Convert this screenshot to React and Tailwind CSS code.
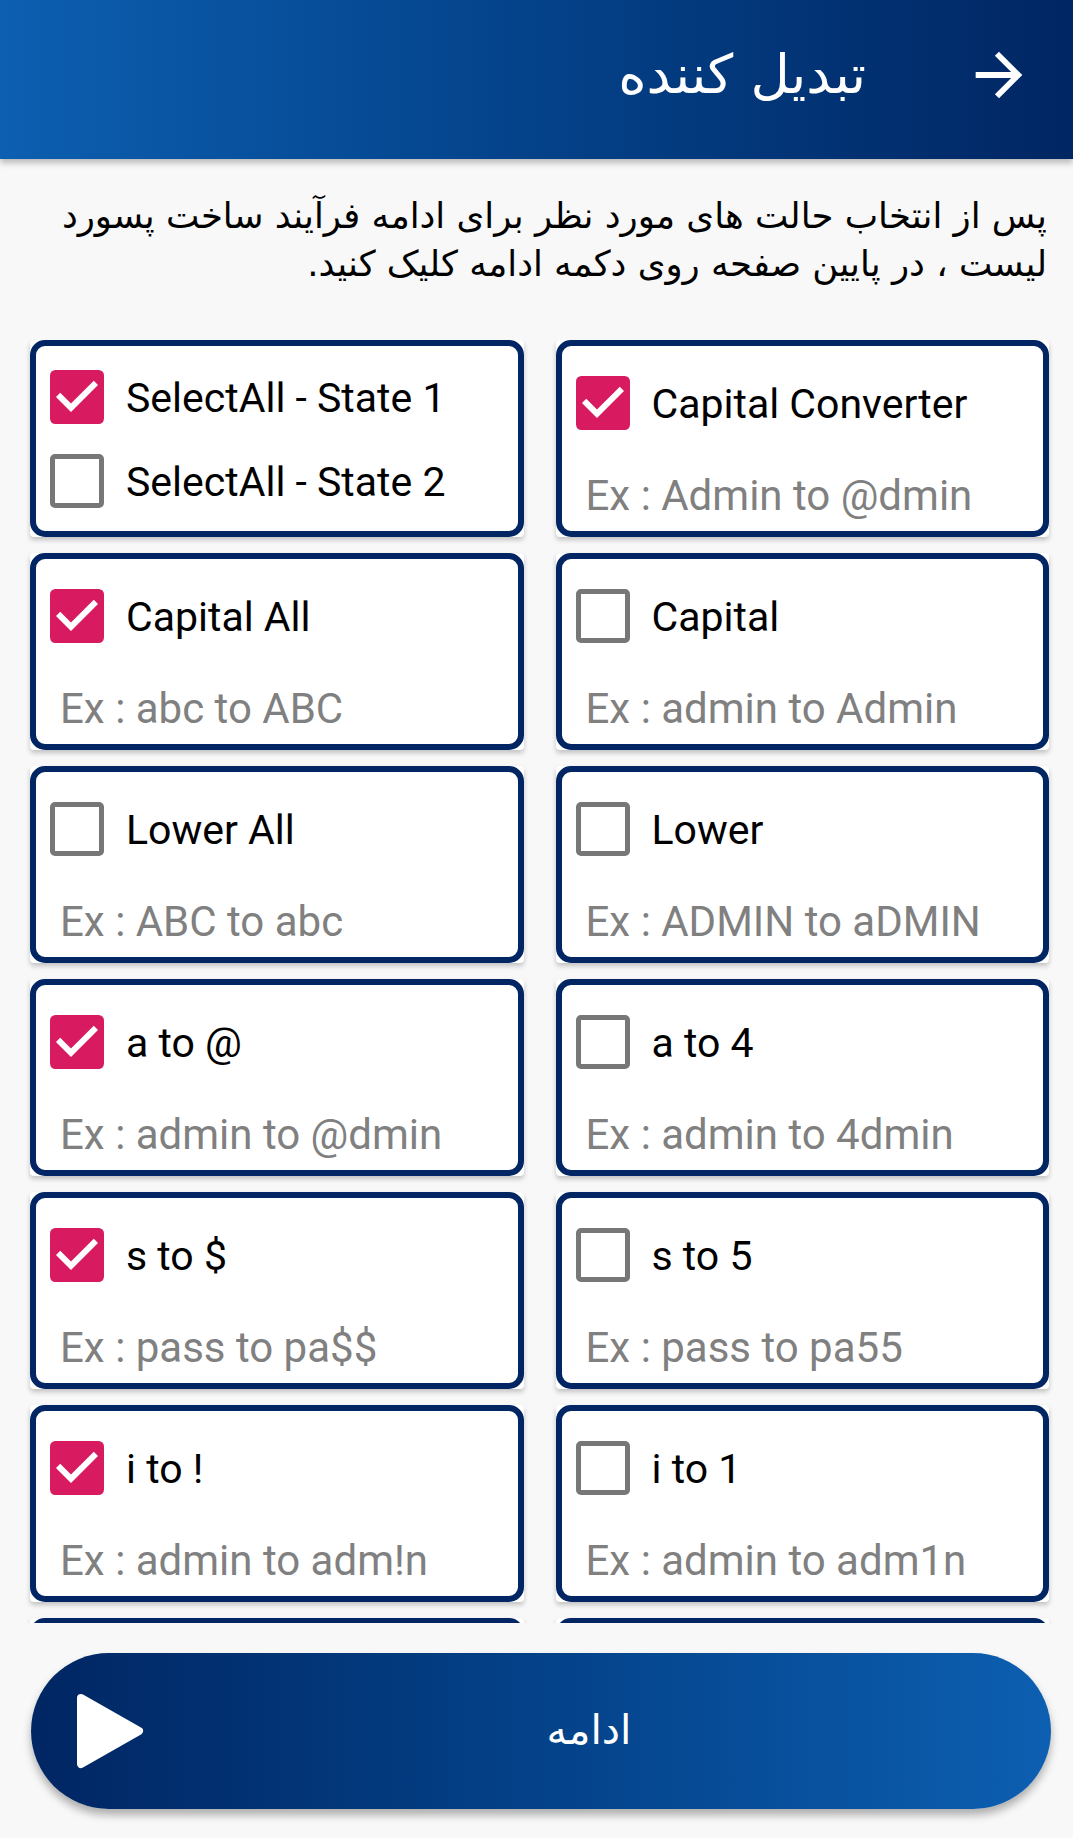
const persian = { fontFamily: '"DejaVu Sans", sans-serif' };

const options = [
  { label: "Capital Converter", example: "Ex : Admin to @dmin", checked: true },
  { label: "Capital All", example: "Ex : abc to ABC", checked: true },
  { label: "Capital", example: "Ex : admin to Admin", checked: false },
  { label: "Lower All", example: "Ex : ABC to abc", checked: false },
  { label: "Lower", example: "Ex : ADMIN to aDMIN", checked: false },
  { label: "a to @", example: "Ex : admin to @dmin", checked: true },
  { label: "a to 4", example: "Ex : admin to 4dmin", checked: false },
  { label: "s to $", example: "Ex : pass to pa$$", checked: true },
  { label: "s to 5", example: "Ex : pass to pa55", checked: false },
  { label: "i to !", example: "Ex : admin to adm!n", checked: true },
  { label: "i to 1", example: "Ex : admin to adm1n", checked: false },
  { label: "o to 0", example: "Ex : password to passw0rd", checked: false },
  { label: "e to 3", example: "Ex : test to t3st", checked: false },
];

function CheckBox({ checked }) {
  if (checked) {
    return (
      <svg className="shrink-0" width="54" height="54" viewBox="3 3 18 18">
        <rect x="3" y="3" width="18" height="18" rx="1.8" fill="#d81b60" />
        <path d="M10 17l-5-5 1.41-1.41L10 14.17l7.59-7.59L19 8l-9 9z" fill="white" />
      </svg>
    );
  }
  return <div className="h-[54px] w-[54px] shrink-0 rounded-[5px] border-[5px] border-[#777777] bg-white" />;
}

function CheckRow({ label, checked }) {
  return (
    <div className="flex h-[54px] items-center">
      <CheckBox checked={checked} />
      <span className="ml-[22px] pt-[3px] text-[41px] leading-none text-black">{label}</span>
    </div>
  );
}

function Card({ children }) {
  return (
    <div className="h-[197px] rounded-[4px] bg-white shadow-[0_3px_5px_rgba(0,0,0,0.22)]">
      <div className="h-full rounded-[15px] border-[6px] border-[#012663]">{children}</div>
    </div>
  );
}

export default function App() {
  return (
    <div
      className="relative flex h-[1838px] w-[1073px] flex-col overflow-hidden bg-[#f8f8f8]"
      style={{ fontFamily: 'Roboto, "DejaVu Sans", sans-serif' }}
    >
      <header
        dir="rtl"
        className="z-10 flex h-[159px] shrink-0 items-center bg-gradient-to-l from-[#012663] to-[#0d5fb1] shadow-[0_4px_6px_rgba(0,0,0,0.25)]"
      >
        <div className="mb-[9px] mr-[39px] flex h-[70px] w-[70px] items-center justify-center">
          <svg width="70" height="70" viewBox="0 0 24 24" fill="white">
            <path d="M12 4l-1.41 1.41L16.17 11H4v2h12.17l-5.58 5.59L12 20l8-8z" />
          </svg>
        </div>
        <h1 className="mb-[10px] mr-[98px] text-[54px] font-normal text-white" style={persian}>
          تبدیل کننده
        </h1>
      </header>

      <p
        dir="rtl"
        className="mt-[33px] pl-[20px] pr-[26px] text-right text-[35.5px] leading-[48px] text-black"
        style={persian}
      >
        پس از انتخاب حالت های مورد نظر برای ادامه فرآیند ساخت پسورد
        <br />
        لیست ، در پایین صفحه روی دکمه ادامه کلیک کنید.
      </p>

      <div className="mt-[52px] h-[1283px] shrink-0 overflow-hidden">
        <div className="grid grid-cols-2 gap-x-[32px] gap-y-[16px] pl-[30px] pr-[24px]">
          <Card>
            <div className="ml-[14px] mt-[24px] flex flex-col gap-[30px]">
              <CheckRow label="SelectAll - State 1" checked />
              <CheckRow label="SelectAll - State 2" checked={false} />
            </div>
          </Card>
          {options.map((o) => (
            <Card key={o.label}>
              <div className="ml-[14px] mt-[30px]">
                <CheckRow label={o.label} checked={o.checked} />
              </div>
              <div className="ml-[24px] mt-[42px] whitespace-nowrap text-[42px] leading-[47px] text-[#808080]">
                {o.example}
              </div>
            </Card>
          ))}
        </div>
      </div>

      <div className="flex-1 px-[31px] pt-[30px]">
        <button className="flex h-[156px] w-[1020px] items-center rounded-full bg-gradient-to-r from-[#012663] to-[#0d5fb1] shadow-[0_6px_8px_rgba(0,0,0,0.3)]">
          <svg className="ml-[44px] shrink-0" width="70" height="78" viewBox="0 0 70 78">
            <path d="M6 6 L64 39 L6 72 Z" fill="white" stroke="white" strokeWidth="8" strokeLinejoin="round" />
          </svg>
          <span className="flex-1 pr-[18px] text-center text-[41px] text-white" style={persian}>
            ادامه
          </span>
        </button>
      </div>
    </div>
  );
}
